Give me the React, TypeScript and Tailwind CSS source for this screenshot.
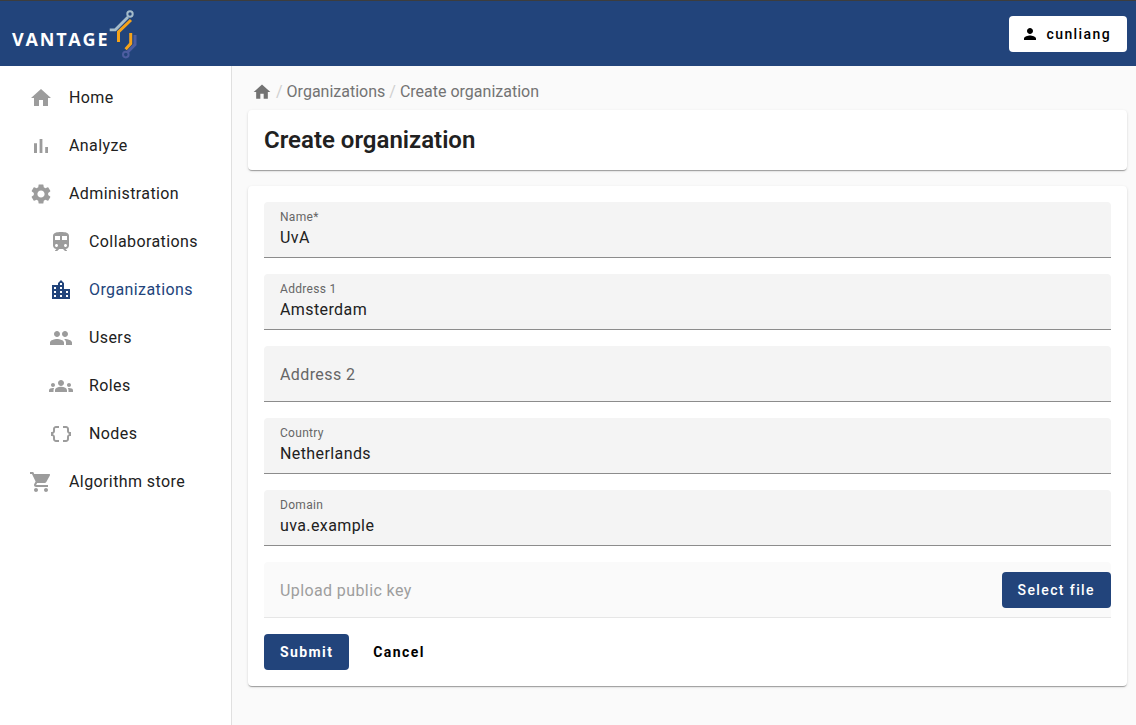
import type { ReactNode } from "react";
import {
  MdDataObject,
  MdGroups,
  MdHome,
  MdLocationCity,
  MdPeople,
  MdPerson,
  MdSettings,
  MdShoppingCart,
  MdTrain,
} from "react-icons/md";

function BarChartIcon() {
  return (
    <svg viewBox="0 0 24 24" className="size-6" fill="currentColor" aria-hidden="true">
      <path d="M5 9.2h3V19H5zM10.6 5h2.8v14h-2.8zm5.6 8H19v6h-2.8z" />
    </svg>
  );
}

function LogoMark() {
  return (
    <svg viewBox="0 0 28 50" className="h-[50px] w-7" fill="none" strokeWidth="3" aria-hidden="true">
      <path d="M0.7 20.8H6.3L19 8" stroke="#a5bccb" strokeWidth="2.8" />
      <circle cx="21" cy="5" r="2.7" stroke="#a5bccb" strokeWidth="2" />
      <path d="M9.5 33V23L22 11" stroke="#f5a31a" />
      <path d="M21.7 24V34.6L16.6 40.2" stroke="#f5a31a" />
      <path d="M26 26V35.6L18.8 43" stroke="#4c5da0" />
      <circle cx="16.8" cy="45.6" r="2.8" stroke="#4c5da0" strokeWidth="2" />
    </svg>
  );
}

type NavItem = { label: string; icon: ReactNode; nested?: boolean; active?: boolean };

const navItems: NavItem[] = [
  { label: "Home", icon: <MdHome className="size-6" /> },
  { label: "Analyze", icon: <BarChartIcon /> },
  { label: "Administration", icon: <MdSettings className="size-6" /> },
  { label: "Collaborations", icon: <MdTrain className="size-6" />, nested: true },
  { label: "Organizations", icon: <MdLocationCity className="size-6" />, nested: true, active: true },
  { label: "Users", icon: <MdPeople className="size-6" />, nested: true },
  { label: "Roles", icon: <MdGroups className="size-6" />, nested: true },
  { label: "Nodes", icon: <MdDataObject className="size-6" />, nested: true },
  { label: "Algorithm store", icon: <MdShoppingCart className="size-6" /> },
];

function Sidebar() {
  return (
    <nav className="w-[232px] shrink-0 border-r border-[#e0e0e0] bg-white py-2" aria-label="Main">
      <ul>
        {navItems.map((item) => (
          <li key={item.label}>
            <a
              href="#"
              aria-current={item.active ? "page" : undefined}
              className={`flex h-12 items-center gap-4 tracking-wide ${item.nested ? "pl-[49px]" : "pl-[29px]"} ${
                item.active ? "text-[#22447b]" : "text-[#212121]"
              }`}
            >
              <span className={item.active ? "text-[#22447b]" : "text-[#9c9c9c]"}>{item.icon}</span>
              {item.label}
            </a>
          </li>
        ))}
      </ul>
    </nav>
  );
}

function Field({ id, label, value, required }: { id: string; label: string; value: string; required?: boolean }) {
  return (
    <div className="flex h-14 flex-col rounded-t border-b border-[#8c8c8c] bg-[#f4f4f4] px-4 pt-2">
      <label htmlFor={id} className="text-xs leading-[14px] tracking-wide text-[#666]">
        {label}
        {required && "*"}
      </label>
      <input
        id={id}
        type="text"
        defaultValue={value}
        required={required}
        className="h-[26px] w-full bg-transparent tracking-wide text-[#212121] outline-none"
      />
    </div>
  );
}

const card = "rounded bg-white shadow-[0_2px_1px_-1px_rgba(0,0,0,0.2),0_1px_1px_0_rgba(0,0,0,0.14),0_1px_3px_0_rgba(0,0,0,0.12)]";

export default function App() {
  return (
    <div className="flex min-h-screen flex-col bg-[#fafafa] font-['Roboto',sans-serif] text-base text-[#212121]">
      <header className="flex h-[66px] items-center justify-between border-t border-[#3d3d3d] bg-[#22447b] pr-[9px] pl-3">
        <a href="#" className="flex items-center text-white">
          <span className="pt-2.5 font-['Open_Sans',sans-serif] text-lg font-bold tracking-widest">VANTAGE</span>
          <LogoMark />
        </a>
        <button
          type="button"
          className="flex h-9 items-center gap-2 rounded bg-white pr-4 pl-3 text-sm font-medium tracking-widest text-black"
        >
          <MdPerson className="size-[18px]" />
          cunliang
        </button>
      </header>

      <div className="flex flex-1">
        <Sidebar />
        <main className="min-w-0 flex-1 pr-[9px] pb-10 pl-4">
          <nav aria-label="Breadcrumb" className="pt-3.5 pb-1.5">
            <ol className="flex h-6 items-center gap-1 pl-1 text-[#737373]">
              <li>
                <a href="#" aria-label="Home">
                  <MdHome className="size-5" />
                </a>
              </li>
              <li aria-hidden="true" className="text-[#cfcfcf]">/</li>
              <li>
                <a href="#">Organizations</a>
              </li>
              <li aria-hidden="true" className="text-[#cfcfcf]">/</li>
              <li aria-current="page">Create organization</li>
            </ol>
          </nav>

          <section className={`p-4 ${card}`}>
            <h1 className="text-2xl leading-7 font-semibold">Create organization</h1>
          </section>

          <form className={`mt-4 flex flex-col gap-4 p-4 ${card}`}>
            <Field id="name" label="Name" value="UvA" required />
            <Field id="address1" label="Address 1" value="Amsterdam" />
            <input
              type="text"
              aria-label="Address 2"
              placeholder="Address 2"
              className="h-14 w-full rounded-t border-b border-[#8c8c8c] bg-[#f4f4f4] px-4 pt-0.5 tracking-wide outline-none placeholder:text-[#666]"
            />
            <Field id="country" label="Country" value="Netherlands" />
            <Field id="domain" label="Domain" value="uva.example" />
            <div className="flex h-14 items-center rounded-t border-b border-[#e6e6e6] bg-[#fafafa] pl-4">
              <input
                type="text"
                disabled
                aria-label="Upload public key"
                placeholder="Upload public key"
                className="min-w-0 flex-1 bg-transparent pt-0.5 tracking-wide placeholder:text-[#9e9e9e]"
              />
              <button
                type="button"
                className="h-9 rounded bg-[#22447b] px-4 text-sm font-medium tracking-widest text-white"
              >
                Select file
              </button>
            </div>
            <div className="flex gap-2">
              <button
                type="submit"
                className="h-9 rounded bg-[#22447b] px-4 text-sm font-bold tracking-widest text-white"
              >
                Submit
              </button>
              <button type="button" className="h-9 rounded px-4 text-sm font-bold tracking-widest text-black">
                Cancel
              </button>
            </div>
          </form>
        </main>
      </div>
    </div>
  );
}
